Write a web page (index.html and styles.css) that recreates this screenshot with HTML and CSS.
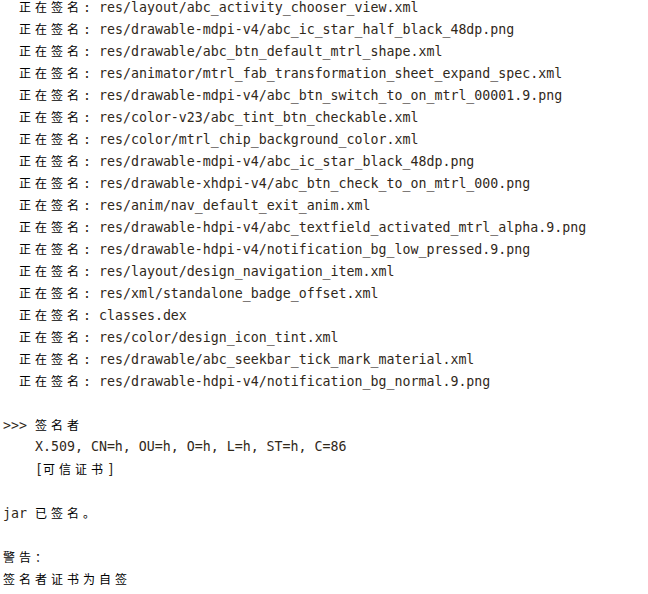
FILE: index.html
```html
<!DOCTYPE html>
<html lang="zh-CN">
<head>
<meta charset="utf-8">
<title>jarsigner output</title>
<link rel="stylesheet" href="styles.css">
</head>
<body>
<div class="console">
  <div class="line ind2"><span class="cjk">正在签名</span>: res/layout/abc_activity_chooser_view.xml</div>
  <div class="line ind2"><span class="cjk">正在签名</span>: res/drawable-mdpi-v4/abc_ic_star_half_black_48dp.png</div>
  <div class="line ind2"><span class="cjk">正在签名</span>: res/drawable/abc_btn_default_mtrl_shape.xml</div>
  <div class="line ind2"><span class="cjk">正在签名</span>: res/animator/mtrl_fab_transformation_sheet_expand_spec.xml</div>
  <div class="line ind2"><span class="cjk">正在签名</span>: res/drawable-mdpi-v4/abc_btn_switch_to_on_mtrl_00001.9.png</div>
  <div class="line ind2"><span class="cjk">正在签名</span>: res/color-v23/abc_tint_btn_checkable.xml</div>
  <div class="line ind2"><span class="cjk">正在签名</span>: res/color/mtrl_chip_background_color.xml</div>
  <div class="line ind2"><span class="cjk">正在签名</span>: res/drawable-mdpi-v4/abc_ic_star_black_48dp.png</div>
  <div class="line ind2"><span class="cjk">正在签名</span>: res/drawable-xhdpi-v4/abc_btn_check_to_on_mtrl_000.png</div>
  <div class="line ind2"><span class="cjk">正在签名</span>: res/anim/nav_default_exit_anim.xml</div>
  <div class="line ind2"><span class="cjk">正在签名</span>: res/drawable-hdpi-v4/abc_textfield_activated_mtrl_alpha.9.png</div>
  <div class="line ind2"><span class="cjk">正在签名</span>: res/drawable-hdpi-v4/notification_bg_low_pressed.9.png</div>
  <div class="line ind2"><span class="cjk">正在签名</span>: res/layout/design_navigation_item.xml</div>
  <div class="line ind2"><span class="cjk">正在签名</span>: res/xml/standalone_badge_offset.xml</div>
  <div class="line ind2"><span class="cjk">正在签名</span>: classes.dex</div>
  <div class="line ind2"><span class="cjk">正在签名</span>: res/color/design_icon_tint.xml</div>
  <div class="line ind2"><span class="cjk">正在签名</span>: res/drawable/abc_seekbar_tick_mark_material.xml</div>
  <div class="line ind2"><span class="cjk">正在签名</span>: res/drawable-hdpi-v4/notification_bg_normal.9.png</div>
  <div class="line"></div>
  <div class="line">&gt;&gt;&gt; <span class="cjk">签名者</span></div>
  <div class="line ind4">X.509, CN=h, OU=h, O=h, L=h, ST=h, C=86</div>
  <div class="line ind4">[<span class="cjk">可信证书</span>]</div>
  <div class="line"></div>
  <div class="line">jar <span class="cjk">已签名。</span></div>
  <div class="line"></div>
  <div class="line"><span class="cjk">警告：</span></div>
  <div class="line"><span class="cjk">签名者证书为自签</span></div>
</div>
</body>
</html>
```
FILE: styles.css
```css
html, body {
  margin: 0;
  padding: 0;
  background: #ffffff;
  overflow: hidden;
}

.console {
  margin-top: -4px;
  padding-left: 3px;
  font-family: "DejaVu Sans Mono", "Liberation Mono", monospace;
  font-size: 13.28px;
  color: #30281a;
}

.line {
  height: 22px;
  line-height: 22px;
  white-space: pre;
}

.ind2 {
  padding-left: 16px;
}

.ind4 {
  padding-left: 32px;
}

.cjk {
  font-family: "Noto Sans CJK SC", sans-serif;
  font-size: 12px;
  letter-spacing: 4px;
  color: #000000;
}
```
